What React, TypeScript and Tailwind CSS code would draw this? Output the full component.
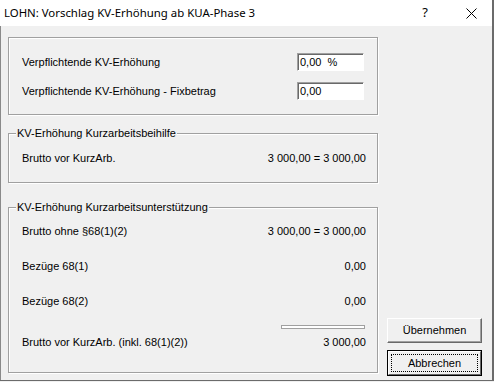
import React from 'react';

const ui = { fontFamily: "'Liberation Sans', Arial, sans-serif" };
const titleFont = { fontFamily: "'Noto Sans', 'Open Sans', sans-serif" };

function GroupBox({ title, className, children }: { title?: string; className?: string; children?: React.ReactNode }) {
  return (
    <div
      className={
        'relative border border-[#a0a0a0] shadow-[inset_1px_1px_0_#ffffff,1px_1px_0_#ffffff] ' + (className ?? '')
      }
    >
      {title && (
        <span className="absolute left-[7px] top-[-8px] bg-[#f0f0f0] px-[1px] text-[11px] leading-[14px] text-black">
          {title}
        </span>
      )}
      {children}
    </div>
  );
}

function Field({ value }: { value: string }) {
  return (
    <div className="h-[18px] w-[67px] border border-t-[#a0a0a0] border-l-[#a0a0a0] border-b-white border-r-white bg-white shadow-[inset_1px_1px_0_#696969] pl-[2px] text-[11px] leading-[16px] whitespace-pre">
      {value}
    </div>
  );
}

function Row({ label, value, className }: { label: string; value: string; className?: string }) {
  return (
    <div className={'flex items-center justify-between pl-[13px] pr-[11px] text-[11px] leading-[14px] ' + (className ?? '')}>
      <span>{label}</span>
      <span>{value}</span>
    </div>
  );
}

export default function App() {
  return (
    <div className="relative h-[382px] w-[494px] overflow-hidden bg-[#f0f0f0] text-black" style={ui}>
      <div className="flex h-[381px] flex-col border-r-2 border-b border-[#6b6b6b]">
        {/* Title bar */}
        <div className="flex h-[26px] items-center bg-white" style={titleFont}>
          <span className="ml-[4px] text-[11.4px] leading-none">LOHN: Vorschlag KV-Erhöhung ab KUA-Phase 3</span>
          <span className="ml-auto mr-[38px] mb-[1px] text-[13px] leading-none">?</span>
          <svg width="11" height="11" viewBox="0 0 11 11" className="mr-[15px]">
            <path d="M0.5 0.5 L10.5 10.5 M10.5 0.5 L0.5 10.5" stroke="#000" strokeWidth="1" />
          </svg>
        </div>

        {/* Body */}
        <div className="flex flex-1 border-l border-[#8a8a8a]">
          <div className="ml-[7px] flex w-[370px] flex-col">
            <GroupBox className="mt-[11px] h-[78px]">
              <div className="flex flex-col gap-[11px] pt-[15px]">
                <div className="flex items-center justify-between pl-[13px] pr-[13px] text-[11px]">
                  <span>Verpflichtende KV-Erhöhung</span>
                  <Field value="0,00  %" />
                </div>
                <div className="flex items-center justify-between pl-[13px] pr-[13px] text-[11px]">
                  <span>Verpflichtende KV-Erhöhung - Fixbetrag</span>
                  <Field value="0,00" />
                </div>
              </div>
            </GroupBox>

            <GroupBox title="KV-Erhöhung Kurzarbeitsbeihilfe" className="mt-[18px] h-[50px]">
              <Row label="Brutto vor KurzArb." value="3 000,00 = 3 000,00" className="pt-[17px]" />
            </GroupBox>

            <GroupBox title="KV-Erhöhung Kurzarbeitsunterstützung" className="mt-[24px] h-[166px]">
              <Row label="Brutto ohne §68(1)(2)" value="3 000,00 = 3 000,00" className="pt-[16px]" />
              <Row label="Bezüge 68(1)" value="0,00" className="pt-[21px]" />
              <Row label="Bezüge 68(2)" value="0,00" className="pt-[21px]" />
              <div className="flex items-start justify-between pl-[13px] pr-[11px] pt-[17px] text-[11px] leading-[14px]">
                <span className="mt-[10px]">Brutto vor KurzArb. (inkl. 68(1)(2))</span>
                <div className="flex flex-col items-end">
                  <div className="mr-[1px] h-[4px] w-[84px] border border-[#a0a0a0] bg-white" />
                  <span className="mt-[6px]">3 000,00</span>
                </div>
              </div>
            </GroupBox>
          </div>

          <div className="flex flex-1 flex-col items-start justify-end pb-[4px] pl-[9px]">
            <button className="h-[25px] w-[95px] border border-t-white border-l-white border-b-[#696969] border-r-[#696969] bg-[#f0f0f0] shadow-[inset_-1px_-1px_0_#a0a0a0] text-[11px]">
              Übernehmen
            </button>
            <button className="mt-[7px] h-[26px] w-[95px] border border-black bg-[#f0f0f0] p-0 text-[11px]">
              <div className="h-full w-full border border-t-white border-l-white border-b-[#696969] border-r-[#696969] p-[2px]">
                <div className="flex h-full w-full items-center justify-center border border-dotted border-black">
                  Abbrechen
                </div>
              </div>
            </button>
          </div>
        </div>
      </div>
    </div>
  );
}
